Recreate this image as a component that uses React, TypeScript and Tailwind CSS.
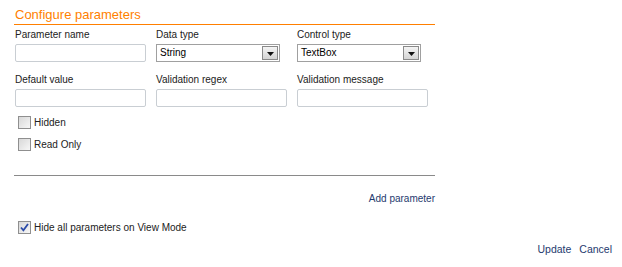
import React from 'react';

const font = { fontFamily: '"Liberation Sans", Arial, sans-serif' };

function TextInput() {
  return <div className="h-[18px] w-[131px] rounded-[2px] border border-[#c9ced3] bg-white" />;
}

function Select({ value }: { value: string }) {
  return (
    <div className="flex h-[18px] w-[124px] items-center border border-[#a0a0a0] bg-white pl-[3px] pr-[1px]">
      <span className="flex-1 text-[10px] leading-none text-black">{value}</span>
      <span className="flex h-[14px] w-[16px] items-end justify-center border border-[#8a8a8a] bg-gradient-to-b from-[#f4f4f4] to-[#d4d4d4] pb-[3px]">
        <svg width="7" height="4" viewBox="0 0 7 4">
          <path d="M0 0h7L3.5 4z" fill="#111" />
        </svg>
      </span>
    </div>
  );
}

function Check({ checked, label }: { checked?: boolean; label: string }) {
  return (
    <div className="flex h-[13px] items-center gap-[3px] pl-[4px]">
      <span className="flex h-[13px] w-[13px] items-center justify-center border border-[#8f8f8f] bg-gradient-to-br from-[#d8d8d8] to-[#f7f7f7]">
        {checked && (
          <svg width="9" height="9" viewBox="0 0 9 9">
            <path d="M1 4.5l2.4 2.8L8 1" fill="none" stroke="#2a4aa8" strokeWidth="1.8" />
          </svg>
        )}
      </span>
      <span className="text-[10px] leading-none text-[#222]">{label}</span>
    </div>
  );
}

function Field({ label, children }: { label: string; children: React.ReactNode }) {
  return (
    <div className="flex w-[131px] flex-col gap-[3px]">
      <div className="text-[10px] leading-[12px] text-[#222]">{label}</div>
      {children}
    </div>
  );
}

export default function App() {
  return (
    <div className="h-[267px] w-[622px] overflow-hidden bg-white leading-none" style={font}>
      <div className="w-[435px] pl-[14px] pt-[7px]">
        <div className="border-b border-[#ff7f00] pb-[2px] pl-[1px] text-[13px] leading-[15px] text-[#ff7f00]">
          Configure parameters
        </div>

        {/* field rows */}
        <div className="mt-[4px] grid grid-cols-[141px_141px_131px] gap-y-[12px] pl-[1px]">
          <Field label="Parameter name">
            <TextInput />
          </Field>
          <Field label="Data type">
            <Select value="String" />
          </Field>
          <Field label="Control type">
            <Select value="TextBox" />
          </Field>
          <Field label="Default value">
            <TextInput />
          </Field>
          <Field label="Validation regex">
            <TextInput />
          </Field>
          <Field label="Validation message">
            <TextInput />
          </Field>
        </div>

        <div className="mt-[9px] flex flex-col gap-[9px]">
          <Check label="Hidden" />
          <Check label="Read Only" />
        </div>

        <div className="mt-[24px] border-t border-[#8a8a8a]" />

        <div className="mt-[17px] text-right text-[10px] leading-[12px] text-[#1e3a6e]">Add parameter</div>

        <div className="mt-[16px]">
          <Check checked label="Hide all parameters on View Mode" />
        </div>
      </div>

      <div className="mt-[9px] flex justify-end gap-[8px] pr-[10px] text-[10.5px] leading-[13px] text-[#1e3a6e]">
        <span>Update</span>
        <span>Cancel</span>
      </div>
    </div>
  );
}
